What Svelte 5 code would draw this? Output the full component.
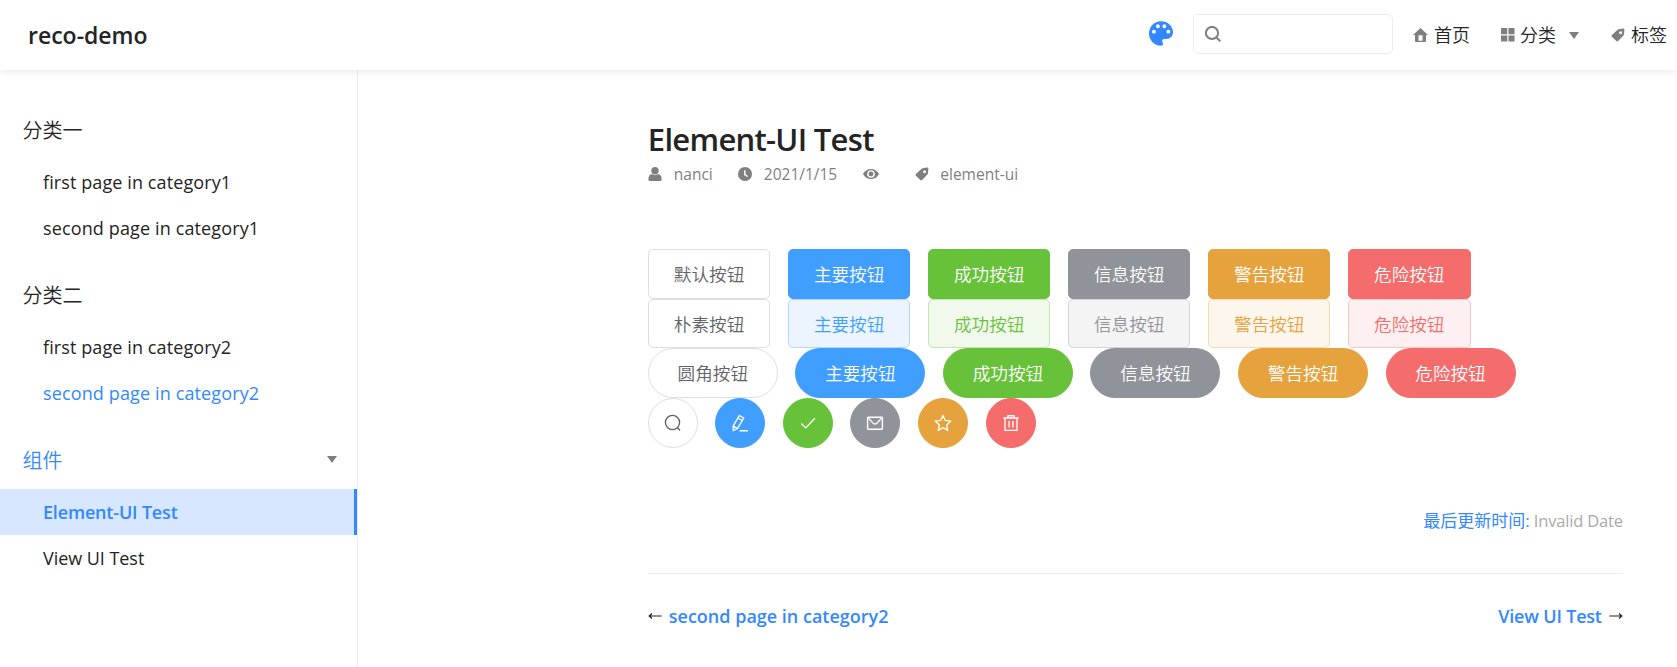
<script>
  const groups = [
    { title: '分类一', items: [{ text: 'first page in category1' }, { text: 'second page in category1' }] },
    { title: '分类二', items: [{ text: 'first page in category2' }, { text: 'second page in category2', link: true }] },
    { title: '组件', open: true, items: [{ text: 'Element-UI Test', active: true }, { text: 'View UI Test' }] }
  ];
  const kinds = ['default', 'primary', 'success', 'info', 'warning', 'danger'];
  const rest = ['主要按钮', '成功按钮', '信息按钮', '警告按钮', '危险按钮'];
  const rows = [
    { style: 'solid', labels: ['默认按钮', ...rest] },
    { style: 'plain', labels: ['朴素按钮', ...rest] },
    { style: 'round', labels: ['圆角按钮', ...rest] }
  ];
  const icons = ['search', 'edit', 'check', 'message', 'star', 'delete'];
</script>

{#snippet tag()}
  <svg class="tag" viewBox="0 0 14 14"><path fill-rule="evenodd" d="M7.600 1.200 12 .6c.9-.1 1.500.5 1.400 1.400l-.5 4.600c0 .4-.2.7-.5 1L7.100 13c-.5.5-1.200.5-1.700 0L.9 8.800c-.5-.5-.5-1.200 0-1.700l5.700-5.400c.3-.3.6-.5 1-.5ZM9.600 3.200a1.500 1.500 0 1 0 0 3 1.500 1.500 0 0 0 0-3Z" /></svg>
{/snippet}

<header>
  <a class="brand" href="#top">reco-demo</a>
  <div class="tools">
    <svg class="palette" viewBox="0 0 24 25"><path fill-rule="evenodd" d="M12 .3C5.300.3 0 5.800 0 12.400c0 6.700 5.400 12.300 12 12.300 1.300 0 2.100-.9 2.100-2 0-.6-.2-1-.5-1.400-.4-.5-.5-.9-.5-1.300 0-1.100.9-2 2-2h2.300c3.700 0 6.600-3 6.600-6.700C24 5.200 18.600.3 12 .3ZM4.900 8.700a1.950 1.950 0 1 1 0 3.900 1.950 1.950 0 0 1 0-3.900Zm4-5.400a1.950 1.950 0 1 1 0 3.900 1.950 1.950 0 0 1 0-3.900Zm6.500 0a1.950 1.950 0 1 1 0 3.900 1.950 1.950 0 0 1 0-3.900Zm4 5.400a1.950 1.950 0 1 1 0 3.900 1.950 1.950 0 0 1 0-3.900Z" /></svg>
    <div class="searchbox">
      <svg viewBox="0 0 16 16"><circle cx="7" cy="7" r="6.100" /><path d="m11.300 11.500 4 3.700" /></svg>
    </div>
    <nav>
      <a class="home" href="#home"><svg viewBox="0 0 15 14"><path fill-rule="evenodd" d="M7.500 0 15 6.900h-2V13q0 1-1 1H3q-1 0-1-1V6.900H0ZM5.500 7.300v5.400h4V7.300Z" /></svg>首页</a>
      <a class="cats" href="#cats"><svg viewBox="0 0 13 13"><path d="M.6 0h5.400v6H0V.6Q0 0 .6 0ZM7.200 0h5.200q.6 0 .6.600V6H7.200ZM0 7.200h6V13H.6q-.6 0-.6-.6ZM7.200 7.200H13v5.200q0 .6-.6.600H7.200Z" /></svg>分类<i class="caret"></i></a>
      <a class="tags" href="#tags">{@render tag()}标签</a>
    </nav>
  </div>
</header>

<div class="body">
  <aside>
    {#each groups as g}
      <section>
        <h3 class:open={g.open}>{g.title}{#if g.open}<i class="caret"></i>{/if}</h3>
        <ul>
          {#each g.items as it}
            <li class:active={it.active} class:link={it.link}><span>{it.text}</span></li>
          {/each}
        </ul>
      </section>
    {/each}
  </aside>

  <main>
    <h1>Element-UI Test</h1>
    <div class="meta">
      <span class="author"><svg viewBox="0 0 14 14"><circle cx="7" cy="3.700" r="3.700" /><path d="M3.400 7.100Q7 9.300 10.600 7.100 13.600 8.300 13.600 12.500 13.600 14 12.200 14H1.800Q.4 14 .4 12.500.4 8.300 3.400 7.100Z" /></svg>nanci</span>
      <span class="date"><svg viewBox="0 0 14 14"><circle cx="7" cy="7" r="7" /><path class="hand" d="M6.800 3.300v4.200l2.900 2" /></svg>2021/1/15</span>
      <span class="views"><svg viewBox="0 0 16 10"><path fill-rule="evenodd" d="M8 0c3.600 0 6.500 2 8 5-1.500 3-4.400 5-8 5S1.500 8 0 5c1.500-3 4.400-5 8-5Zm0 1.200a3.800 3.800 0 1 0 0 7.600 3.800 3.800 0 0 0 0-7.600Z" /><circle cx="8" cy="5" r="2.400" /></svg></span>
      <span class="topic">{@render tag()}element-ui</span>
    </div>

    <div class="demo">
      {#each rows as row}
        <div class="row {row.style}">
          {#each row.labels as label, i}
            <button class={kinds[i]}>{label}</button>
          {/each}
        </div>
      {/each}
      <div class="row circle">
        {#each icons as icon, i}
          <button class={kinds[i]} aria-label={icon}>
            <svg viewBox="0 0 18 18">
              {#if icon === 'search'}
                <circle cx="8.500" cy="8.500" r="7.100" /><path d="m13.400 13.700 2.700 2.700" />
              {:else if icon === 'edit'}
                <path d="m8.400 1.500 4.300 2.500-6.200 10.500L2.300 16.500 2.200 12ZM7 4l4.200 2.500M2.300 12l4.100 2.500M8.600 16.700h8.200" />
              {:else if icon === 'check'}
                <path d="m2.300 9.500 4.500 4.400 9-9.600" />
              {:else if icon === 'message'}
                <rect x="1.600" y="3.200" width="14.800" height="12" rx=".8" /><path d="m2.100 3.900 5.100 5.300q1.800 1.500 3.600 0l5.100-5.300" />
              {:else if icon === 'star'}
                <path d="m9 1.700 2.300 4.700 5.200.8-3.800 3.700.9 5.300L9 13.700l-4.600 2.500.9-5.300-3.800-3.700 5.200-.8Z" />
              {:else}
                <path d="M1.300 4h15.400M6 4V1.700h6V4M3 4v12.400h12V4M7.100 7v6.500M10.900 7v6.500" />
              {/if}
            </svg>
          </button>
        {/each}
      </div>
    </div>

    <div class="updated"><b>最后更新时间:</b><span>Invalid Date</span></div>
    <div class="pager">
      <span class="prev"><svg viewBox="0 0 14 10"><path d="M13.700 5H1.200M4 2.500 1.200 5 4 7.500" /></svg><a href="#prev">second page in category2</a></span>
      <span class="next"><a href="#next">View UI Test</a><svg viewBox="0 0 14 10"><path d="M.3 5h12.500M10 2.500 12.800 5 10 7.500" /></svg></span>
    </div>
  </main>
</div>

<style>
  :global(body) { margin: 0; overflow: hidden; background: #fff; }
  :global(#app) { font-family: "Open Sans", "Noto Sans CJK SC", sans-serif; color: #242424; }
  a { color: inherit; text-decoration: none; white-space: nowrap; }
  svg { display: block; flex: none; fill: #7f7f7f; }
  header { position: relative; z-index: 1; height: 70px; box-sizing: border-box; padding: 0 10px 0 28px; display: flex; align-items: center; justify-content: space-between; background: #fff; box-shadow: 0 1px 8px rgba(0, 0, 0, .1); }
  .brand { font-size: 23px; font-weight: 600; letter-spacing: 0; }
  .tools { display: flex; align-items: center; }
  .palette { width: 24px; height: 25px; margin: -3px 20px 0 0; fill: #3388ff; }
  .searchbox { width: 200px; height: 40px; box-sizing: border-box; border: 1px solid #eaecef; border-radius: 5px; margin: -2px 20.500px 0 0; padding: 11px; }
  .searchbox svg { width: 16px; height: 16px; fill: none; stroke: #7f7f7f; stroke-width: 2; }
  nav { display: flex; font-family: "Noto Sans CJK SC", sans-serif; font-weight: 350; font-size: 18px; line-height: 26px; margin-top: -3px; }
  nav a { display: flex; align-items: center; }
  nav svg, .cats .caret { margin-top: 3px; }
  .home svg { width: 15px; height: 14px; margin-right: 6px; }
  .cats { margin-left: 31px; }
  .cats svg { width: 13.500px; height: 13.500px; margin-right: 5.500px; }
  .caret { width: 0; height: 0; border: 5px solid transparent; border-top: 7px solid #7f7f7f; border-bottom: 0; }
  .cats .caret { margin-left: 13px; }
  .tags { margin-left: 31.500px; }
  .tag { width: 14px; height: 14px; }
  .tags .tag { margin-right: 6.500px; }
  .body { display: flex; height: 597px; }
  aside { width: 357px; border-right: 1px solid #eaecef; padding-top: 31px; flex: none; }
  section { height: 165px; }
  h3 { margin: 0; height: 58px; padding: 0 20px 0 22.500px; display: flex; align-items: center; justify-content: space-between; font: 350 20px/58px "Noto Sans CJK SC", sans-serif; }
  h3 .caret { margin-top: -2px; }
  h3.open { color: #3388ff; }
  ul { list-style: none; margin: 0; padding: 0; }
  li { height: 46px; box-sizing: border-box; padding-left: 43px; border-right: 3px solid transparent; font-size: 18px; line-height: 46px; letter-spacing: .1px; white-space: nowrap; }
  li:last-child { letter-spacing: .13px; }
  section:last-child li:last-child { letter-spacing: -.05px; }
  li.link { color: #3388ff; }
  li.active { color: #3388ff; background: #d6e7ff; border-color: #3388ff; font-weight: 600; letter-spacing: -.18px; }
  main { width: 975px; margin-left: 289.800px; padding-top: 46px; }
  h1 { margin: 0; height: 46px; font-size: 31px; line-height: 46px; font-weight: 600; letter-spacing: -.7px; white-space: nowrap; }
  .meta { display: flex; height: 24px; align-items: center; color: #7f7f7f; font-size: 15.500px; line-height: 24px; }
  .meta span { display: flex; align-items: center; }
  .author svg, .date svg { width: 14px; height: 14px; }
  .author { width: 90px; gap: 12px; }
  .date { width: 125px; gap: 12px; }
  .hand { fill: none; stroke: #fff; stroke-width: 1.500; }
  .views { width: 52px; }
  .views svg { width: 16px; height: 10px; }
  .topic { gap: 11.500px; }
  .demo { margin-top: 63px; }
  .row { display: flex; height: 50px; gap: 17.550px; }
  .plain { height: 49px; }
  button { width: 122.500px; height: 100%; box-sizing: border-box; padding: 0; border: 1px solid; border-radius: 5px; display: flex; align-items: center; justify-content: center; font: 350 17.600px/24px "Noto Sans CJK SC", sans-serif; color: #fff; }
  .round button { width: 130px; border-radius: 25px; }
  .circle button { width: 50px; border-radius: 50%; }
  .circle svg { width: 18px; height: 18px; fill: none; stroke: currentColor; stroke-width: 1.350; }
  .default { background: #fff; border-color: #dcdfe6; color: #606266; }
  .primary { background: #409eff; border-color: #409eff; }
  .success { background: #67c23a; border-color: #67c23a; }
  .info { background: #909399; border-color: #909399; }
  .warning { background: #e6a23c; border-color: #e6a23c; }
  .danger { background: #f56c6c; border-color: #f56c6c; }
  .plain .primary { color: #409eff; background: #ecf5ff; border-color: #b3d8ff; }
  .plain .success { color: #67c23a; background: #f0f9eb; border-color: #c2e7b0; }
  .plain .info { color: #909399; background: #f4f4f5; border-color: #d3d4d6; }
  .plain .warning { color: #e6a23c; background: #fdf6ec; border-color: #f5dab1; }
  .plain .danger { color: #f56c6c; background: #fef0f0; border-color: #fbc4c4; }
  .updated { display: flex; justify-content: flex-end; gap: 4px; margin-top: 60px; height: 26px; font-size: 16.500px; line-height: 26px; color: #aaa; letter-spacing: -.18px; }
  .updated b { color: #3388ff; font: 400 17px/26px "Open Sans", "Noto Sans CJK SC", sans-serif; letter-spacing: 0; }
  .pager { margin-top: 39px; border-top: 1px solid #eaecef; padding-top: 29px; display: flex; justify-content: space-between; font-size: 18px; line-height: 26px; font-weight: 600; }
  .pager span { display: flex; align-items: center; gap: 7px; }
  .pager a { color: #3388ff; }
  .next a { letter-spacing: -.2px; }
  .pager svg { width: 14px; height: 10px; fill: none; stroke: #242424; stroke-width: 1.200; }
</style>
